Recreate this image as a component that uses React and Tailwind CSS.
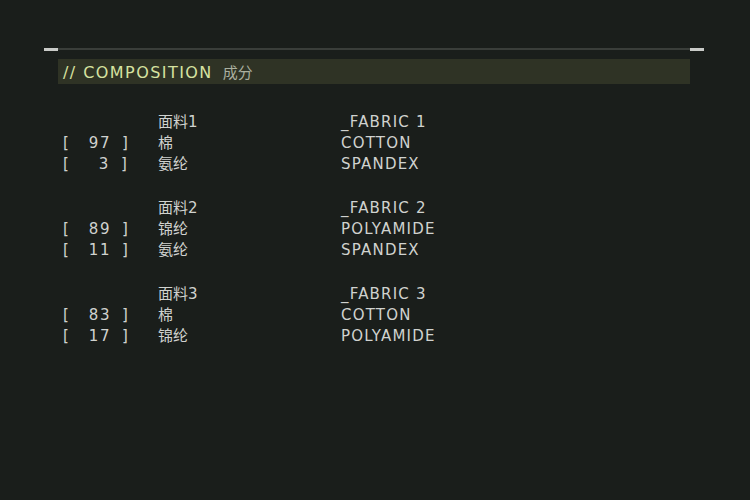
import React from 'react';

const fabrics = [
  {
    label: '面料1',
    code: '_FABRIC 1',
    items: [
      { pct: '97', cn: '棉', en: 'COTTON' },
      { pct: '3', cn: '氨纶', en: 'SPANDEX' },
    ],
  },
  {
    label: '面料2',
    code: '_FABRIC 2',
    items: [
      { pct: '89', cn: '锦纶', en: 'POLYAMIDE' },
      { pct: '11', cn: '氨纶', en: 'SPANDEX' },
    ],
  },
  {
    label: '面料3',
    code: '_FABRIC 3',
    items: [
      { pct: '83', cn: '棉', en: 'COTTON' },
      { pct: '17', cn: '锦纶', en: 'POLYAMIDE' },
    ],
  },
];

const font = { fontFamily: '"DejaVu Sans", "Noto Sans CJK SC", sans-serif' };

const Row = ({ left, cn, en }) => (
  <div className="flex h-[21px] items-center">
    <div className="w-[100px] pl-[5px]">{left}</div>
    <div className="w-[183px]">{cn}</div>
    <div className="tracking-[0.08em]">{en}</div>
  </div>
);

const App = () => {
  return (
    <div
      className="w-[750px] h-[500px] bg-[#1a1e1b] text-[#d0d2cf] text-[15px] pt-[47px] pl-[44px]"
      style={font}
    >
      <div className="w-[660px]">
        <div className="flex items-center h-[4px]">
          <div className="w-[14px] h-[3px] bg-[#c9cbc8]" />
          <div className="flex-1 h-[2px] bg-[#3a3e3a]" />
          <div className="w-[14px] h-[3px] bg-[#c9cbc8]" />
        </div>

        <div className="mx-[14px] mt-[8px] h-[25px] bg-[#2f3325] flex items-center pl-[5px] pt-[3px] gap-[10px]">
          <span className="text-[#d6e2a0] text-[16px] tracking-[0.09em]">// COMPOSITION</span>
          <span className="text-[#aab0a0] text-[15px]">成分</span>
        </div>

        <div className="mx-[14px] mt-[28px] flex flex-col gap-[23px]">
          {fabrics.map((f) => (
            <div key={f.code}>
              <Row left="" cn={f.label} en={f.code} />
              {f.items.map((it) => (
                <Row
                  key={it.en + it.pct}
                  left={
                    <div className="flex">
                      <span>[</span>
                      <span className={it.pct.length === 1 ? 'ml-[30px] tracking-[0.1em]' : 'ml-[20px] tracking-[0.1em]'}>{it.pct}</span>
                      <span className="ml-[11px]">]</span>
                    </div>
                  }
                  cn={it.cn}
                  en={it.en}
                />
              ))}
            </div>
          ))}
        </div>
      </div>
    </div>
  );
};

export default App;
